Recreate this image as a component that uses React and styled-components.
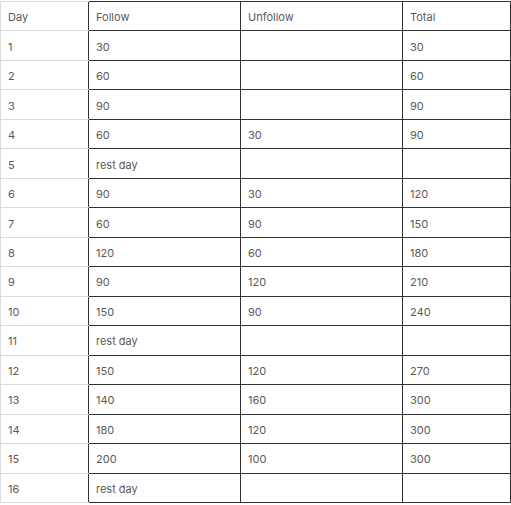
import React from "react";
import styled, { createGlobalStyle } from "styled-components";

const Global = createGlobalStyle`
  html, body { margin: 0; padding: 0; background: #fff; }
  body { font-family: Inter, "Open Sans", sans-serif; }
`;

const Wrap = styled.div`
  padding-top: 1px;
  width: 511px;
`;

const Table = styled.table`
  border-collapse: collapse;
  width: 510px;
  table-layout: fixed;
  font-family: Inter, "Open Sans", sans-serif;
  font-size: 11px;
  color: #5a5a5a;
`;

const Cell = styled.td`
  height: 26.47px;
  padding: 2px 6px 0 7px;
  vertical-align: middle;
  text-align: left;
  font-weight: 400;
  border: 1px solid ${(p) => (p.$light ? "#dcdcdc" : "#333")};
  ${(p) => (p.$light ? "border-right: none;" : "")}
  white-space: nowrap;
`;

const rows = [
  ["Day", "Follow", "Unfollow", "Total"],
  ["1", "30", "", "30"],
  ["2", "60", "", "60"],
  ["3", "90", "", "90"],
  ["4", "60", "30", "90"],
  ["5", "rest day", "", ""],
  ["6", "90", "30", "120"],
  ["7", "60", "90", "150"],
  ["8", "120", "60", "180"],
  ["9", "90", "120", "210"],
  ["10", "150", "90", "240"],
  ["11", "rest day", "", ""],
  ["12", "150", "120", "270"],
  ["13", "140", "160", "300"],
  ["14", "180", "120", "300"],
  ["15", "200", "100", "300"],
  ["16", "rest day", "", ""],
];

const widths = [88, 152, 162, 108];

export default function App() {
  return (
    <Wrap>
      <Global />
      <Table>
        <colgroup>
          {widths.map((w, i) => (
            <col key={i} style={{ width: w }} />
          ))}
        </colgroup>
        <tbody>
          {rows.map((r, i) => (
            <tr key={i}>
              {r.map((c, j) => (
                <Cell key={j} $light={j === 0}>
                  {c}
                </Cell>
              ))}
            </tr>
          ))}
        </tbody>
      </Table>
    </Wrap>
  );
}
